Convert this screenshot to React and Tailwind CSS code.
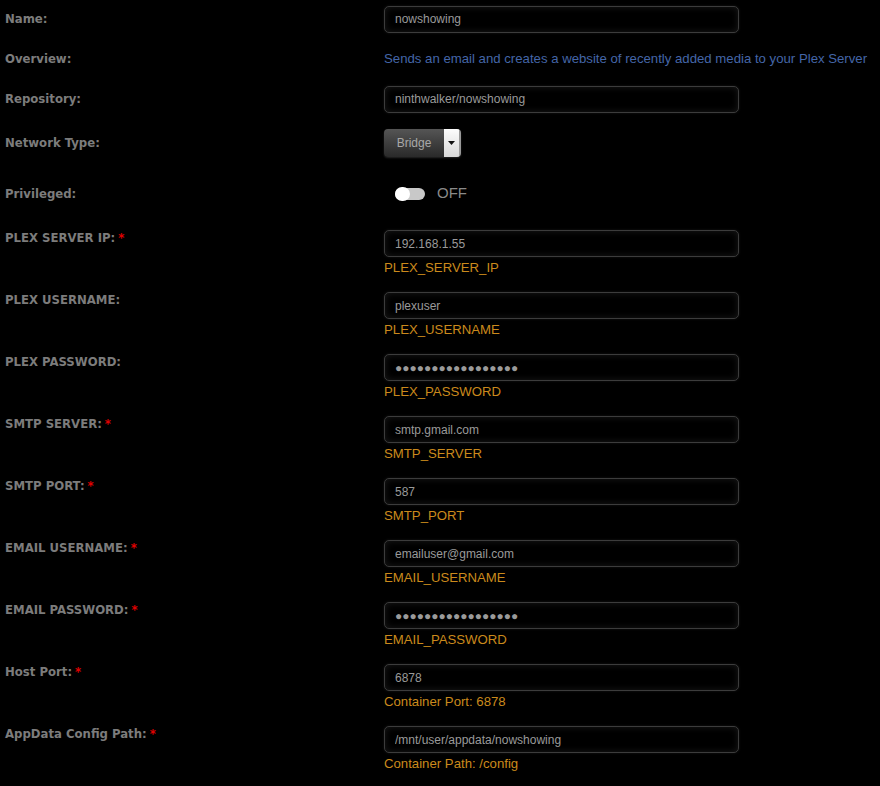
import React from "react";

const DOTS = "●●●●●●●●●●●●●●●●●";

const envRows = [
    { label: "PLEX SERVER IP:", required: true, value: "192.168.1.55", help: "PLEX_SERVER_IP" },
    { label: "PLEX USERNAME:", required: false, value: "plexuser", help: "PLEX_USERNAME" },
    { label: "PLEX PASSWORD:", required: false, value: DOTS, help: "PLEX_PASSWORD" },
    { label: "SMTP SERVER:", required: true, value: "smtp.gmail.com", help: "SMTP_SERVER" },
    { label: "SMTP PORT:", required: true, value: "587", help: "SMTP_PORT" },
    { label: "EMAIL USERNAME:", required: true, value: "emailuser@gmail.com", help: "EMAIL_USERNAME" },
    { label: "EMAIL PASSWORD:", required: true, value: DOTS, help: "EMAIL_PASSWORD" },
    { label: "Host Port:", required: true, value: "6878", help: "Container Port: 6878" },
    { label: "AppData Config Path:", required: true, value: "/mnt/user/appdata/nowshowing", help: "Container Path: /config" },
];

const TextBox = ({ value }) => (
    <input
        type="text"
        value={value}
        readOnly
        className="block w-[355px] h-[27px] bg-black border border-[#3c3c3c] rounded-[5px] pl-[10px] text-[12px] text-[#9a9a9a] outline-none shadow-[inset_0_0_7px_rgba(255,255,255,0.10),0_0_3px_rgba(255,255,255,0.08)]"
        style={{ fontFamily: '"Liberation Sans", Arial, "DejaVu Sans", sans-serif' }}
    />
);

const Label = ({ children, required }) => (
    <div
        className="pl-[5px] text-[13px] leading-[16px] font-bold text-[#7c7c7c]"
        style={{ fontFamily: '"DejaVu Sans Condensed", "DejaVu Sans", sans-serif', fontStretch: "condensed" }}
    >
        {children}
        {required && <span className="text-[#e00000] ml-[3px]">*</span>}
    </div>
);

export default function App() {
    return (
        <div className="min-h-screen bg-black pb-6" style={{ fontFamily: '"Liberation Sans", Arial, sans-serif' }}>
            <div className="grid grid-cols-[384px_1fr] h-[38px] items-center">
                <Label>Name:</Label>
                <TextBox value="nowshowing" />
            </div>
            <div className="grid grid-cols-[384px_1fr] h-[41px] items-center">
                <Label>Overview:</Label>
                <div className="text-[13.2px] text-[#4466a8] whitespace-nowrap">
                    Sends an email and creates a website of recently added media to your Plex Server
                </div>
            </div>
            <div className="grid grid-cols-[384px_1fr] h-[40px] items-center">
                <Label>Repository:</Label>
                <TextBox value="ninthwalker/nowshowing" />
            </div>
            <div className="grid grid-cols-[384px_1fr] h-[47px] items-center">
                <Label>Network Type:</Label>
                <div className="flex w-[77px] h-[28px] rounded-[4px] overflow-hidden shadow-[0_1px_2px_rgba(255,255,255,0.15)]">
                    <div className="flex-1 flex items-center justify-center text-[12px] text-[#a8a8a8] bg-gradient-to-b from-[#555] to-[#2a2a2a]">
                        Bridge
                    </div>
                    <div className="w-[17px] flex items-center justify-center bg-gradient-to-b from-[#fdfdfd] to-[#d8d8d8] border-r-2 border-[#999]">
                        <svg width="7" height="4" viewBox="0 0 7 4">
                            <path d="M0 0h7L3.5 4z" fill="#111" />
                        </svg>
                    </div>
                </div>
            </div>
            <div className="grid grid-cols-[384px_1fr] h-[55px] items-center">
                <Label>Privileged:</Label>
                <div className="flex items-center pl-[11px]">
                    <div className="relative w-[30px] h-[12px] rounded-full bg-[#c8c8c8]">
                        <div className="absolute left-0 top-[-1px] w-[15px] h-[14px] rounded-full bg-white" />
                    </div>
                    <span className="ml-[12px] text-[15px] text-[#8a8a8a]">OFF</span>
                </div>
            </div>
            <div className="pt-[3px]">
                {envRows.map((row, i) => (
                    <div key={i} className="grid grid-cols-[384px_1fr] h-[62px]">
                        <div className="pt-[6px]">
                            <Label required={row.required}>{row.label}</Label>
                        </div>
                        <div className="pt-[6px]">
                            <TextBox value={row.value} />
                            <div className="text-[13.2px] leading-[20px] text-[#cb8a1c] pt-[1px]">{row.help}</div>
                        </div>
                    </div>
                ))}
            </div>
        </div>
    );
}
